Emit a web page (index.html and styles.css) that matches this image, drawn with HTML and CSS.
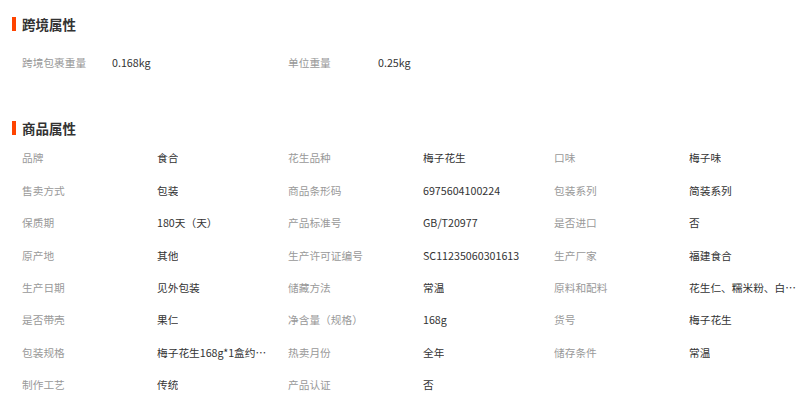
FILE: index.html
```html
<!DOCTYPE html>
<html lang="zh-CN">
<head>
<meta charset="utf-8">
<link rel="stylesheet" href="styles.css">
</head>
<body>
<div class="page">
  <section class="block block-cross">
    <h2 class="title">跨境属性</h2>
    <div class="grid grid-cross">
      <div class="cell"><span class="label">跨境包裹重量</span><span class="value">0.168kg</span></div>
      <div class="cell"><span class="label">单位重量</span><span class="value">0.25kg</span></div>
    </div>
  </section>
  <section class="block block-goods">
    <h2 class="title">商品属性</h2>
    <div class="grid grid-goods">
      <div class="cell"><span class="label">品牌</span><span class="value">食合</span></div>
      <div class="cell"><span class="label">花生品种</span><span class="value">梅子花生</span></div>
      <div class="cell"><span class="label">口味</span><span class="value">梅子味</span></div>
      <div class="cell"><span class="label">售卖方式</span><span class="value">包装</span></div>
      <div class="cell"><span class="label">商品条形码</span><span class="value">6975604100224</span></div>
      <div class="cell"><span class="label">包装系列</span><span class="value">简装系列</span></div>
      <div class="cell"><span class="label">保质期</span><span class="value">180天（天）</span></div>
      <div class="cell"><span class="label">产品标准号</span><span class="value">GB/T20977</span></div>
      <div class="cell"><span class="label">是否进口</span><span class="value">否</span></div>
      <div class="cell"><span class="label">原产地</span><span class="value">其他</span></div>
      <div class="cell"><span class="label">生产许可证编号</span><span class="value">SC11235060301613</span></div>
      <div class="cell"><span class="label">生产厂家</span><span class="value">福建食合</span></div>
      <div class="cell"><span class="label">生产日期</span><span class="value">见外包装</span></div>
      <div class="cell"><span class="label">储藏方法</span><span class="value">常温</span></div>
      <div class="cell"><span class="label">原料和配料</span><span class="value">花生仁、糯米粉、白砂糖、梅子粉</span></div>
      <div class="cell"><span class="label">是否带壳</span><span class="value">果仁</span></div>
      <div class="cell"><span class="label">净含量（规格）</span><span class="value">168g</span></div>
      <div class="cell"><span class="label">货号</span><span class="value">梅子花生</span></div>
      <div class="cell"><span class="label">包装规格</span><span class="value">梅子花生168g*1盒约12小包</span></div>
      <div class="cell"><span class="label">热卖月份</span><span class="value">全年</span></div>
      <div class="cell"><span class="label">储存条件</span><span class="value">常温</span></div>
      <div class="cell"><span class="label">制作工艺</span><span class="value">传统</span></div>
      <div class="cell"><span class="label">产品认证</span><span class="value">否</span></div>
    </div>
  </section>
</div>
</body>
</html>
```
FILE: styles.css
```css
html, body {
  margin: 0;
  padding: 0;
  background: #fff;
}
body {
  font-family: "Noto Sans CJK SC", "Microsoft YaHei", sans-serif;
  font-size: 10.7px;
  color: #333;
}
.page {
  padding: 17px 0 0 12px;
  width: 785px;
  overflow: hidden;
}
.title {
  margin: 0;
  font-size: 13.5px;
  font-weight: bold;
  line-height: 14px;
  height: 14px;
  color: #333;
  border-left: 4px solid #ff4400;
  padding-left: 6px;
}
.grid {
  display: grid;
  grid-template-columns: repeat(3, 266px);
  grid-auto-rows: 32.4px;
  padding-left: 10px;
}
.block-cross .grid {
  margin-top: 15.8px;
}
.block-goods {
  margin-top: 41.8px;
}
.block-goods .grid {
  margin-top: 6.8px;
}
.cell {
  display: flex;
  align-items: center;
  white-space: nowrap;
  min-width: 0;
}
.label {
  color: #999;
  flex: none;
}
.grid-cross .label {
  width: 90px;
}
.grid-goods .label {
  width: 135px;
}
.value {
  color: #333;
  overflow: hidden;
  text-overflow: ellipsis;
  max-width: 110.5px;
}
```
